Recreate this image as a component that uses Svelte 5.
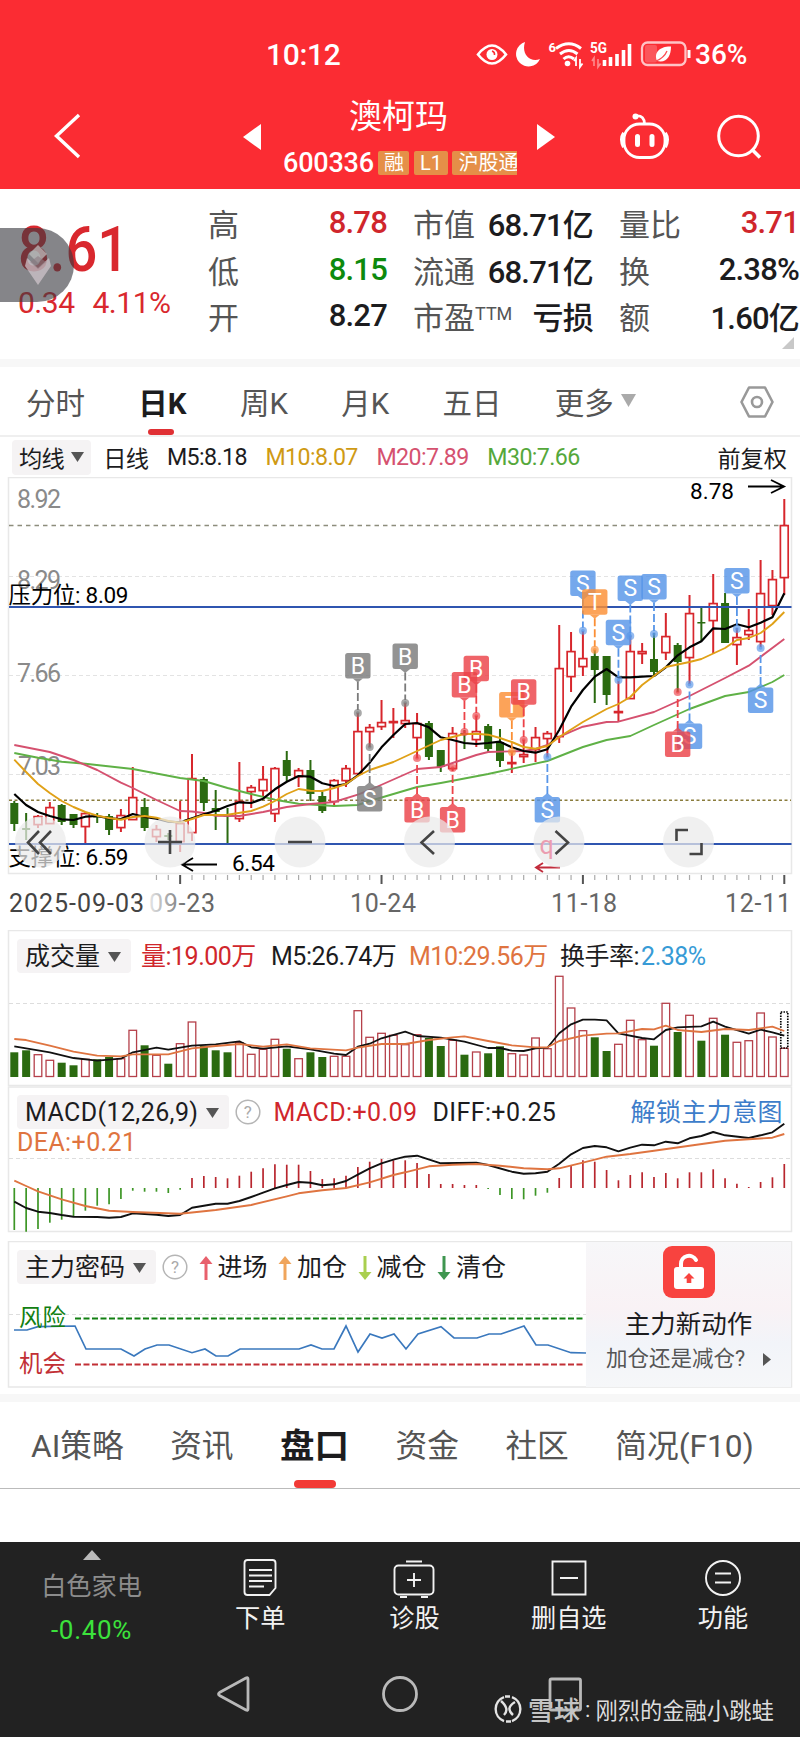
<script lang="ts">
	type Pair = [number, number]
	type Marker = { text: string; kind: string; i: number; top: number; dot: number; up?: boolean }

	const STEP = 11.846
	const x = (i: number) => 14.3 + STEP * i

	// [high, body top, body bottom, low, rising]
	const candles = [
		[801, 803, 824, 831, 0], [813, 828, 830, 840, 0], [815, 816, 825, 828, 1], [802, 807, 824, 824, 1],
		[804, 805, 822, 825, 0], [814, 814, 825, 828, 0], [812, 813, 827, 843, 1], [813, 816, 817, 823, 0],
		[814, 816, 830, 835, 0], [809, 815, 828, 832, 1], [767, 797, 820, 820, 1], [798, 807, 828, 831, 0],
		[825, 829, 837, 842, 1], [833, 835, 837, 840, 0], [801, 823, 842, 852, 1], [754, 778, 833, 841, 1],
		[777, 779, 803, 811, 0], [790, 808, 812, 830, 0], [808, 815, 816, 843, 0], [762, 801, 819, 822, 1],
		[785, 787, 792, 808, 1], [766, 779, 791, 796, 1], [767, 768, 814, 822, 1], [751, 760, 776, 781, 0],
		[768, 770, 777, 787, 1], [760, 770, 794, 801, 0], [792, 796, 811, 813, 0], [779, 780, 802, 807, 1],
		[765, 768, 781, 787, 1], [713, 731, 774, 775, 1], [724, 727, 732, 747, 1], [700, 722, 727, 730, 1],
		[708, 721, 723, 738, 1], [703, 720, 724, 728, 1], [713, 723, 738, 758, 1], [721, 723, 757, 760, 0],
		[750, 750, 767, 772, 0], [727, 733, 769, 771, 1], [730, 733, 735, 749, 0], [716, 731, 740, 747, 1],
		[724, 726, 749, 752, 0], [729, 742, 761, 767, 0], [751, 762, 764, 773, 1], [740, 754, 757, 763, 1],
		[727, 737, 750, 762, 1], [731, 733, 739, 757, 1], [625, 668, 737, 743, 1], [632, 651, 677, 692, 1],
		[631, 658, 667, 676, 1], [650, 656, 670, 703, 0], [656, 656, 695, 705, 0], [681, 711, 713, 722, 1],
		[636, 651, 699, 699, 1], [643, 651, 654, 664, 1], [633, 659, 672, 676, 0], [613, 636, 653, 660, 1],
		[643, 645, 662, 692, 0], [595, 613, 658, 684, 1], [608, 622, 623, 641, 0], [574, 603, 621, 654, 1],
		[593, 603, 643, 643, 0], [628, 637, 645, 665, 1], [609, 630, 635, 640, 1], [560, 593, 642, 647, 1],
		[570, 579, 606, 615, 1], [499, 525, 578, 595, 1],
	]

	const ma5 = [
		794, 805, 812, 816, 819.3, 820, 816.7, 816, 818.3, 819, 814, 817, 818.7, 821.7, 822.3, 818.3, 814.3, 810.7, 806,
		802.3, 803, 798.7, 789.3, 781.7, 776, 776.7, 783.3, 786, 784, 775.3, 762.7, 747.3, 735, 724, 723, 727.3, 737.3,
		740, 743, 744, 743, 741.7, 747.3, 751, 752.7, 749.3, 730, 706.7, 690, 676.7, 669, 677.3, 677.3, 676.7, 676,
		667.3, 655.3, 647.3, 641.3, 628.3, 629, 624.3, 627.3, 622.7, 617.3, 593.3,
	].map((y, i): Pair => [i, y])
	const ma10: Pair[] = [
		[0, 759.7], [1, 772], [2, 784], [3, 793], [4, 801], [5, 807], [6, 812], [7, 815.7], [8, 818], [9, 819.7],
		[10, 817], [11, 816], [12, 817.7], [13, 821], [14, 822.7], [15, 819], [16, 815], [18, 814.7], [20, 811],
		[21, 806.7], [22, 801], [23, 794], [24, 789], [25, 790.7], [26, 791], [27, 788], [28, 784], [29, 776],
		[30, 770], [32, 762], [34, 751], [36, 740], [38, 734], [39, 733.7], [40, 734.7], [41, 738], [42, 742],
		[43, 747], [44, 748.7], [45, 746], [46, 737], [48, 722], [50, 709], [51, 704], [52, 697], [53, 685],
		[54, 676], [55, 667], [57, 662], [58, 659], [60, 648], [61, 640], [62, 638], [63, 633], [64, 624], [65, 612],
	]
	const ma20: Pair[] = [
		[0, 745], [3, 752], [5, 760], [7, 770], [9, 782.7], [10, 788], [12, 800], [14, 811], [15, 811.5], [16, 813],
		[17, 815.7], [19, 816], [21, 812], [23, 807], [25, 804], [27, 802], [29, 794.7], [30, 790], [34, 769],
		[36, 767], [37, 763], [39, 755], [40, 752], [43, 751], [44, 749], [45, 745], [46, 737], [47, 731.7],
		[48, 726.7], [50, 722], [51, 721.7], [54, 712], [57, 696], [60, 678], [62, 665.7], [65, 639],
	]
	const ma30: Pair[] = [
		[0, 753], [2, 757.7], [4, 761.7], [6, 763.7], [10, 769], [14, 778], [16, 781], [18, 788], [20, 794],
		[22, 799.7], [24, 803.7], [27, 806], [29, 805], [30, 801], [34, 787], [36, 783], [40, 774], [45, 761],
		[48, 747], [50, 740], [52, 736], [54, 725], [57, 709], [60, 696], [62, 692], [64, 682], [65, 675],
	]

	const markers: Marker[] = [
		{ text: 'B', kind: 'grey', i: 29, top: 653, dot: 713 },
		{ text: 'B', kind: 'grey', i: 33, top: 643.5, dot: 703 },
		{ text: 'S', kind: 'grey', i: 30, top: 786, dot: 747, up: true },
		{ text: 'B', kind: 'red', i: 34, top: 797, dot: 758, up: true },
		{ text: 'B', kind: 'red', i: 37, top: 807, dot: 768, up: true },
		{ text: 'B', kind: 'red', i: 39, top: 655.7, dot: 716 },
		{ text: 'B', kind: 'red', i: 38, top: 672, dot: 732 },
		{ text: 'T', kind: 'orange', i: 42, top: 692, dot: 752 },
		{ text: 'B', kind: 'red', i: 43, top: 679.3, dot: 740 },
		{ text: 'S', kind: 'blue', i: 45, top: 797, dot: 757, up: true },
		{ text: 'S', kind: 'blue', i: 48, top: 570.5, dot: 630.7 },
		{ text: 'T', kind: 'orange', i: 49, top: 589.3, dot: 649.7 },
		{ text: 'S', kind: 'blue', i: 51, top: 619.7, dot: 680 },
		{ text: 'S', kind: 'blue', i: 52, top: 575.4, dot: 636 },
		{ text: 'S', kind: 'blue', i: 54, top: 574, dot: 634 },
		{ text: 'S', kind: 'blue', i: 57, top: 723.4, dot: 684.5, up: true },
		{ text: 'B', kind: 'red', i: 56, top: 731.4, dot: 692, up: true },
		{ text: 'S', kind: 'blue', i: 61, top: 568, dot: 629 },
		{ text: 'S', kind: 'blue', i: 63, top: 687.4, dot: 648, up: true },
	]

	const volumes = [
		24.7, 26.7, 22.3, 16.7, 14.3, 11.7, 17.7, 17.7, 20, 18.3, 46.7, 31.7, 21.7, 13.3, 33.3, 55, 31, 26.7, 24.7, 34.3,
		22.7, 27.7, 37.7, 28.3, 18.3, 24.7, 20, 20.7, 20.7, 66.3, 39.7, 43.7, 41.7, 32.3, 42.3, 39, 31, 36.7, 22.3, 25,
		23.7, 30.7, 23.3, 22, 39, 28.3, 100.7, 69, 46.3, 39.7, 26, 32.7, 56.7, 37.3, 31.3, 73.7, 45, 61.7, 36.3, 58.7,
		42.3, 34.7, 36.3, 64, 40, 28.7,
	]
	// averages of the lower panels are kept in thirds of a pixel
	const vol5: Pair[] = [
		[0, 364], [2, 376], [3, 382], [5, 399], [7, 407], [9, 401], [10, 382], [12, 368], [13, 374], [15, 362],
		[17, 358], [19, 349], [20, 367], [21, 371], [23, 364], [25, 373], [27, 386], [28, 390], [29, 365], [30, 356],
		[31, 340], [33, 320], [34, 333], [36, 338], [38, 350], [40, 369], [41, 369], [42, 377], [43, 378], [44, 370],
		[45, 368], [46, 325], [47, 298], [48, 284], [49, 284], [50, 286], [51, 325], [53, 339], [54, 343], [55, 315],
		[56, 307], [58, 304], [59, 290], [60, 305], [62, 326], [63, 314], [64, 322], [65, 332],
	]
	const vol10: Pair[] = [
		[0, 342], [1, 345], [3, 362], [5, 380], [7, 392], [9, 394], [10, 388], [13, 388], [15, 370], [17, 363],
		[19, 357], [21, 365], [23, 358], [25, 370], [28, 376], [29, 368], [31, 357], [33, 357], [35, 345], [37, 337],
		[38, 334], [40, 348], [42, 361], [44, 367], [45, 367], [46, 348], [48, 332], [50, 326], [51, 325], [53, 312],
		[54, 313], [55, 302], [56, 315], [58, 321], [60, 312], [62, 315], [64, 305], [65, 318],
	]
	const macd = [
		915, 920, 912, 893, 884, 873, 857, 842, 838, 822, 797, 800, 800, 804, 794, 759, 753, 756, 760, 752, 740, 730,
		718, 719, 719, 738, 762, 760, 752, 726, 710, 702, 706, 706, 714, 747, 777, 777, 780, 780, 792, 810, 822, 823,
		812, 803, 759, 722, 706, 710, 735, 766, 750, 742, 756, 744, 760, 742, 742, 733, 760, 776, 786, 771, 757, 717,
	]
	const diff: Pair[] = [
		[0, 830], [1, 849], [2, 860], [3, 864], [4, 870], [5, 875], [7, 876], [8, 878], [9, 876], [10, 865],
		[12, 869], [13, 873], [14, 870], [15, 848], [17, 836], [18, 836], [19, 828], [20, 816], [21, 803], [22, 790],
		[23, 780], [24, 771], [25, 773], [26, 781], [27, 778], [28, 768], [29, 749], [30, 730], [31, 715], [32, 704],
		[33, 695], [34, 692], [36, 715], [39, 713], [40, 720], [42, 740], [43, 746], [44, 745], [45, 740], [46, 716],
		[47, 688], [48, 669], [49, 663], [50, 667], [51, 679], [52, 668], [53, 659], [54, 661], [55, 650], [56, 655],
		[57, 640], [58, 633], [59, 621], [60, 631], [62, 639], [63, 631], [64, 622], [65, 596],
	]
	const dea: Pair[] = [
		[0, 767], [1, 783], [2, 799], [4, 823], [6, 843], [8, 857], [10, 861], [14, 866], [17, 855], [20, 840],
		[23, 814], [24, 805], [26, 796], [28, 789], [30, 772], [32, 750], [33, 742], [35, 724], [37, 719], [39, 717],
		[41, 722], [43, 730], [45, 733], [46, 730], [48, 713], [50, 695], [52, 687], [54, 677], [57, 662], [60, 647],
		[62, 643], [64, 638], [65, 627],
	]
	const risk =
		'14,1330 27,1330 38,1326.7 75,1326 86,1349 121,1349 134,1356 145,1349 157,1345 169,1345 192,1352.7 205,1349 216,1356 228,1356 240,1349 299,1349 311,1345 322,1349 334,1349 346,1326 358,1352 370,1334 382,1338 394,1334 406,1349 418,1334 441,1326.7 454,1338 477,1338 489,1334 501,1334 524,1326 536,1345 548,1345 571,1352.7 586,1353'

	const line = (pts: Pair[]) => pts.map(([i, y]) => `${x(i).toFixed(1)},${y}`).join(' ')
	const thirds = (pts: Pair[]) => line(pts.map(([i, y]): Pair => [i, +(925 + y / 3).toFixed(1)]))

	const ticks = Array.from({ length: 54 }, (_, n) => n + 12)
	const bigTicks = [14, 31, 48, 65]
	const signals = [
		{ label: '进场', color: '#e8606c', down: false },
		{ label: '加仓', color: '#f0a55c', down: false },
		{ label: '减仓', color: '#a9cf4f', down: true },
		{ label: '清仓', color: '#3f9650', down: true },
	]
	let period = $state('日K')
	let section = $state('盘口')
</script>

{#snippet caret()}
	<svg class="caret" width="13" height="10" viewBox="0 0 13 10"><path d="M0 0h13l-6.5 10z" fill="currentColor" /></svg>
{/snippet}

{#snippet help()}
	<svg class="help" width="26" height="26" viewBox="0 0 26 26">
		<circle cx="13" cy="13" r="11.8" fill="none" stroke="#b5b5b5" stroke-width="1.5" />
		<text x="13" y="19" text-anchor="middle" font-size="17" fill="#aaa">?</text>
	</svg>
{/snippet}

<div class="phone">
	<header>
		<div class="status">
			<span class="clock">10:12</span>
			<svg width="217" height="34" viewBox="474 37 217 34" fill="none" stroke="#fff">
				<path d="M478 54.500q14-18 28 0q-14 18-28 0z" stroke-width="2.600" />
				<circle cx="492" cy="54.500" r="5.500" fill="#fff" stroke="none" />
				<path d="M492 51q3 1 2.500 4" stroke="#fb2c33" stroke-width="1.500" />
				<path d="M525 42a12.500 12.500 0 1 0 15 17c-10 4-19-5-15-17z" fill="#fff" stroke="none" />
				<text x="548.500" y="52" font-size="13" class="mini">6</text>
				<path d="M556 48.500q13-9.500 25 0M560 54q9-7 17.500 0M563.500 59q5-4.500 10.500 0" stroke-width="3" />
				<circle cx="567.500" cy="63.500" r="2.800" fill="#fff" stroke="none" />
				<path d="M574 61l2-3v8M580 59v8l2.500-3.500" stroke-width="1.800" />
				<text x="590" y="53" font-size="14.500" textLength="17" lengthAdjust="spacingAndGlyphs" class="mini">5G</text>
				<path d="M592 61l2-3v8M598 59v8l2.500-3.500" stroke-width="1.600" opacity=".45" />
				<path d="M604.500 66v-6M610.500 66v-9M617 66v-12M623.500 66v-16M629.500 66v-22" stroke-width="3.600" />
				<rect x="642" y="42.500" width="43.500" height="22.500" rx="5.500" stroke="#ffc4c6" stroke-width="2.300" />
				<rect x="645" y="45" width="12" height="17.500" rx="2" fill="#fff" fill-opacity=".2" stroke="none" />
				<path d="M657 61c-4-9 4-15 14-14.500c0 9-4 17-14 14.500z" fill="#fff" stroke="none" />
				<path d="M656 61q8-3 11-10" stroke="#fb4c52" stroke-width="1.300" />
				<path d="M689 50v8" stroke-width="3" />
			</svg>
			<span class="power">36%</span>
		</div>
		<div class="titlebar">
			<svg class="back" width="30" height="48" viewBox="53 112 30 48"><path d="M79 115L56.500 136L79 157" fill="none" stroke="#fff" stroke-width="3.400" /></svg>
			<svg class="prev" width="18" height="26" viewBox="0 0 18 26"><path d="M18 0v26L0 13z" fill="#fff" /></svg>
			<div class="stock">
				<h1>澳柯玛</h1>
				<div class="code">
					<span>600336</span>
					<i>融</i>
					<i class="l1">L1</i>
					<i class="hk">沪股通</i>
				</div>
			</div>
			<svg class="next" width="18" height="26" viewBox="0 0 18 26"><path d="M0 0v26l18-13z" fill="#fff" /></svg>
			<svg class="robot" width="52" height="48" viewBox="619 113 52 48" fill="none" stroke="#fff" stroke-width="2.800">
				<rect x="624" y="125" width="41" height="33.500" rx="15.500" />
				<path d="M624 134q-4 6 0 14M665 134q4 6 0 14" stroke-width="4" />
				<path d="M644.500 125q0-8.500-8-8" />
				<circle cx="635.500" cy="117.500" r="3" fill="#fff" stroke="none" />
				<path d="M637.500 137.500v8M652 137.500v8" stroke-width="5" stroke-linecap="round" />
			</svg>
			<svg class="search" width="46" height="46" viewBox="716 113 46 46" fill="none" stroke="#fff" stroke-width="3">
				<circle cx="738.500" cy="136" r="19.800" />
				<path d="M751.500 149l8.500 8.500" stroke-width="3.600" />
			</svg>
		</div>
	</header>

	<section class="quote">
		<div class="last">
			<strong>8.61</strong>
			<p><span>0.34</span><span>4.11%</span></p>
		</div>
		<dl>
			<dt>高</dt><dd class="up">8.78</dd>
			<dt>市值</dt><dd>68.71亿</dd>
			<dt>量比</dt><dd class="up">3.71</dd>
			<dt>低</dt><dd class="down">8.15</dd>
			<dt>流通</dt><dd>68.71亿</dd>
			<dt>换</dt><dd>2.38%</dd>
			<dt>开</dt><dd>8.27</dd>
			<dt>市盈<sup>TTM</sup></dt><dd>亏损</dd>
			<dt>额</dt><dd>1.60亿</dd>
		</dl>
		<svg class="corner" width="12" height="12" viewBox="0 0 12 12"><path d="M12 0v12H0z" fill="#c8c8c8" /></svg>
		<div class="bubble">
			<svg width="32" height="42" viewBox="0 0 32 42"><path d="M16 1l9 9-9 9-9-9z" fill="#bbb" opacity=".75" /><path d="M5 14l11 10 11-10 2 8-13 19L3 22z" fill="#d3c8ce" opacity=".7" /><path d="M8 18l8 7 8-7-8-6z" fill="#8c7c82" opacity=".6" /></svg>
		</div>
	</section>

	<nav class="periods">
		{#each ['分时', '日K', '周K', '月K', '五日', '更多'] as name}
			<button class:active={period === name} onclick={() => (period = name)}>
				{name}
				{#if name === '更多'}
					<svg width="15" height="13" viewBox="0 0 15 13"><path d="M0 0h15L7.500 13z" fill="#aaa" /></svg>
				{/if}
			</button>
		{/each}
		<svg class="gear" width="36" height="34" viewBox="0 0 36 34" fill="none" stroke="#999" stroke-width="2.600"><path d="M10 2.500h16L33.500 17L26 31.500H10L2.500 17z" stroke-linejoin="round" /><circle cx="18" cy="17" r="5" /></svg>
	</nav>

	<div class="averages">
		<button class="pick">均线 {@render caret()}</button>
		<span>日线</span>
		<span>M5:8.18</span>
		<span class="m10">M10:8.07</span>
		<span class="m20">M20:7.89</span>
		<span class="m30">M30:7.66</span>
		<span class="adjust">前复权</span>
	</div>

	<div class="kline">
		<svg width="800" height="453" viewBox="0 477 800 453">
			<defs>
				<linearGradient id="haze" x1="0" x2="1"><stop offset="0" stop-color="#fff" stop-opacity="0.9" /><stop offset="1" stop-color="#fff" stop-opacity="0" /></linearGradient>
			</defs>
			<path d="M8.500 477.500H791.500V873.500H8.500z" fill="none" stroke="#e8e8e8" stroke-width="1.500" />
			<path d="M9 576.500H791M9 675.500H791M9 774.500H791" stroke="#e3e3e3" stroke-dasharray="4 3" />
			<path d="M9 525.500H791" stroke="#8d8d7c" stroke-width="1.300" stroke-dasharray="4.500 4" />
			<path d="M9 800.300H791" stroke="#8a7c3c" stroke-width="1.500" stroke-dasharray="3 2.500" />
			<g class="axis">
				<text x="17" y="507.500" textLength="44">8.92</text>
				<text x="17" y="588.500" textLength="44">8.29</text>
				<text x="17" y="682" textLength="44">7.66</text>
				<text x="18" y="775" textLength="43">7.03</text>
			</g>

			{#each candles as [high, top, bottom, low, rising], i}
				{@const color = rising ? '#d7262c' : '#2b6a10'}
				<path d={`M${x(i)} ${high}V${top}M${x(i)} ${bottom}V${low}`} stroke={color} stroke-width="2" />
				{#if rising}
					<rect x={x(i) - 3.9} y={top + 0.6} width="7.800" height={Math.max(bottom - top - 1, 1)} fill="#fff" stroke={color} stroke-width="1.700" />
				{:else}
					<rect x={x(i) - 4} y={top} width="8" height={Math.max(bottom - top, 1.5)} fill={color} />
				{/if}
			{/each}

			<g fill="none" stroke-width="1.900" stroke-linejoin="round">
				<polyline points={line(ma30)} stroke="#5fb146" />
				<polyline points={line(ma20)} stroke="#d5516f" />
				<polyline points={line(ma5)} stroke="#000" stroke-width="2.200" />
				<polyline points={line(ma10)} stroke="#e0a117" />
			</g>

			<path d="M9 607H791.500M9 844H791.500" stroke="#2f55b0" stroke-width="2.200" />

			{#each markers as m}
				<g class={`marker ${m.kind}`}>
					<path class="stem" d={m.up ? `M${x(m.i)} ${m.dot + 7}V${m.top - 3}` : `M${x(m.i)} ${m.top + 29}V${m.dot - 3}`} />
					<circle cx={x(m.i)} cy={m.dot} r="4" />
					<circle cx={x(m.i)} cy={m.dot} r="1.800" />
					<rect x={x(m.i) - 12.7} y={m.top} width="25.400" height="25.500" rx="2.500" />
					<path class="tip" d={m.up ? `M${x(m.i) - 5} ${m.top}l5-4l5 4z` : `M${x(m.i) - 5} ${m.top + 25.5}l5 4l5-4z`} />
					<text x={x(m.i)} y={m.top + 21}>{m.text}</text>
				</g>
			{/each}

			<g class="note">
				<text x="8.500" y="602.500" textLength="120">压力位: 8.09</text>
				<text x="8.500" y="864.500" textLength="120">支撑位: 6.59</text>
				<text x="232" y="871" textLength="43">6.54</text>
				<text x="690" y="499" textLength="44">8.78</text>
			</g>
			<g fill="none" stroke="#000" stroke-width="1.900">
				<path d="M748 486.500H784M771 480L784 486.500L771 493" />
				<path d="M217 864.500H182M193 858L182 864.500L193 871" />
				<path d="M560 867.500H536M543 863L536 867.500L543 872" stroke="#c22c3c" />
			</g>

			{#each ticks as i}
				<path d={`M${x(i)} 875V${bigTicks.includes(i) ? 884 : 880}`} stroke={bigTicks.includes(i) ? '#555' : '#aaa'} stroke-width={bigTicks.includes(i) ? 2 : 1.2} />
			{/each}
			<g class="dates">
				<text x="149" y="911.500" textLength="66">09-23</text>
				<rect x="146" y="888" width="42" height="28" fill="url(#haze)" />
				<text x="9" y="911.500" textLength="135" class="first">2025-09-03</text>
				<text x="350" y="911.500" textLength="66">10-24</text>
				<text x="551" y="911.500" textLength="66">11-18</text>
				<text x="725" y="911.500" textLength="66">12-11</text>
			</g>

			<!-- zoom and pan controls -->
			<g fill="#eaeaea" fill-opacity=".72">
				{#each [40.5, 170, 300, 429.5, 559, 688.5] as cx}
					<circle {cx} cy="842" r="25.500" />
				{/each}
			</g>
			<text x="539.500" y="854" font-size="25" fill="#eb9db0">q</text>
			<g fill="none" stroke="#444" stroke-width="2.600">
				<path d="M39 831L28 842.500L39 854M51 831L40 842.500L51 854" />
				<path d="M158 842H182M170 830V854M288 842H312" />
				<path d="M434 831L421.500 842.500L434 854M555.500 831L568 842.500L555.500 854" />
				<path d="M676.500 841V830H688M701.500 843V854H689.500" />
			</g>
		</svg>
	</div>

	<section class="panel volume">
		<div class="legend">
			<button class="pick">成交量 {@render caret()}</button>
			<span class="v up">量:19.00万</span>
			<span class="v5">M5:26.74万</span>
			<span class="v10 warm">M10:29.56万</span>
			<span>换手率:<b>2.38%</b></span>
		</div>
		<svg width="800" height="156" viewBox="0 930 800 156">
			<path d="M8.500 930.500H791.500V1085.500H8.500z" fill="none" stroke="#e8e8e8" stroke-width="1.500" />
			<path d="M9 1003.500H791" stroke="#ddd" stroke-dasharray="4 3" />
			{#each volumes as v, i}
				{#if candles[i][4]}
					<rect x={x(i) - 3.8} y={1077 - v} width="7.600" height={v - 0.5} fill="#fff" stroke="#b5404a" stroke-width="1.300" />
				{:else}
					<rect x={x(i) - 4} y={1077 - v} width="8" height={v} fill="#2b6a10" />
				{/if}
			{/each}
			<rect x={x(65) - 3.5} y="1012" width="7" height="36" fill="none" stroke="#000" stroke-width="1.700" stroke-dasharray="1.500 1.200" />
			<g fill="none" stroke-width="1.800" stroke-linejoin="round">
				<polyline points={thirds(vol5)} stroke="#111" />
				<polyline points={thirds(vol10)} stroke="#df7440" />
			</g>
		</svg>
	</section>

	<section class="panel macd">
		<div class="legend">
			<button class="pick">MACD(12,26,9) {@render caret()}</button>
			{@render help()}
			<span class="md up">MACD:+0.09</span>
			<span>DIFF:+0.25</span>
			<a href="#unlock">解锁主力意图</a>
			<span class="dea warm">DEA:+0.21</span>
		</div>
		<svg width="800" height="155" viewBox="0 1086 800 155">
			<path d="M8.500 1087H791.500V1231.500H8.500z" fill="none" stroke="#e8e8e8" stroke-width="1.500" />
			<path d="M9 1158.500H791" stroke="#ddd" stroke-dasharray="4 3" />
			{#each macd as v, i}
				<path d={`M${x(i)} 1188V${(925 + v / 3).toFixed(1)}`} stroke={v > 789 ? '#3d9626' : '#b8262e'} stroke-width="1.700" />
			{/each}
			<g fill="none" stroke-width="1.900" stroke-linejoin="round">
				<polyline points={thirds(diff)} stroke="#111" />
				<polyline points={thirds(dea)} stroke="#df7440" />
			</g>
		</svg>
	</section>

	<section class="panel secret">
		<div class="legend">
			<button class="pick">主力密码 {@render caret()}</button>
			{@render help()}
			{#each signals as s}
				<span class="signal">
					<svg width="14" height="24" viewBox="0 0 14 24">
						<path transform={s.down ? 'rotate(180 7 12)' : undefined} d="M7 0l6.500 8H8.500v16h-3V8H.5z" fill={s.color} />
					</svg>{s.label}
				</span>
			{/each}
		</div>
		<svg width="800" height="153" viewBox="0 1241 800 153">
			<path d="M8.500 1241.500H791.500V1387H8.500z" fill="none" stroke="#e8e8e8" stroke-width="1.500" />
			<path d="M9 1314.500H586" stroke="#ddd" stroke-dasharray="4 3" />
			<path d="M75 1318.500H584" stroke="#128012" stroke-width="2" stroke-dasharray="6 2.500" />
			<path d="M75 1364.500H584" stroke="#c22f35" stroke-width="2" stroke-dasharray="6 2.500" />
			<polyline points={risk} fill="none" stroke="#3a78bd" stroke-width="1.700" />
			<text x="19" y="1326" font-size="23.500" fill="#128012">风险</text>
			<text x="19" y="1372" font-size="23.500" fill="#c22f35">机会</text>
		</svg>
		<aside>
			<svg width="52" height="52" viewBox="0 0 52 52">
				<rect width="52" height="52" rx="9" fill="#f8433f" />
				<path d="M18 22v-4a8 8 0 0 1 15-4" fill="none" stroke="#fff" stroke-width="4" stroke-linecap="round" />
				<rect x="11" y="21" width="30" height="22" rx="3" fill="#fff" />
				<path d="M26 27l5.500 5.500h-3.200V37h-4.600v-4.500h-3.200z" fill="#f8433f" />
			</svg>
			<strong>主力新动作</strong>
			<p>加仓还是减仓? <svg width="8" height="13" viewBox="0 0 8 13"><path d="M0 0l8 6.500L0 13z" fill="#555" /></svg></p>
		</aside>
	</section>

	<nav class="sections">
		{#each ['AI策略', '资讯', '盘口', '资金', '社区', '简况(F10)'] as name}
			<button class:active={section === name} onclick={() => (section = name)}>{name}</button>
		{/each}
	</nav>

	<footer>
		<div class="actions">
			<div class="sector">
				<svg width="18" height="10" viewBox="0 0 18 10"><path d="M9 0l9 10H0z" fill="#bbb" /></svg>
				<span>白色家电</span>
				<em>-0.40%</em>
			</div>
			<div class="action">
				<svg width="42" height="42" viewBox="0 0 42 42"><path d="M7 3h25q3 0 3 3v25l-6 7H7q-3 0-3-3V6q0-3 3-3z" transform="translate(1.500 0)" /><path d="M10 13h23M10 18.500h23M10 24h23M10 29.500h15" /></svg>
				下单
			</div>
			<div class="action">
				<svg width="42" height="42" viewBox="0 0 42 42"><rect x="1.500" y="8.500" width="39" height="29" rx="4" /><path d="M13 4.500h16M7 40h7M28 40h7M21 16v14M14 23h14" /></svg>
				诊股
			</div>
			<div class="action">
				<svg width="42" height="42" viewBox="0 0 42 42"><path d="M4.500 4.500h33v33h-33zM12 21h18" /></svg>
				删自选
			</div>
			<div class="action">
				<svg width="42" height="42" viewBox="0 0 42 42"><circle cx="21" cy="21" r="17" /><path d="M13 16.500h16M13 25.500h16" /></svg>
				功能
			</div>
		</div>
		<div class="system">
			<svg width="40" height="40" viewBox="0 0 40 40"><path d="M33 5v30q0 2-2 1L4.500 21.500q-2-1.500 0-3L31 4q2-1 2 1z" stroke-linejoin="round" /></svg>
			<svg width="40" height="40" viewBox="0 0 40 40"><circle cx="20" cy="20" r="16.500" /></svg>
			<svg width="40" height="40" viewBox="0 0 40 40"><rect x="5" y="5" width="30.500" height="31" rx="1.500" /></svg>
		</div>
		<div class="credit">
			<svg width="30" height="30" viewBox="0 0 30 30" fill="none" stroke="#e4e4e4" stroke-width="2.400"><path d="M11 27a12.800 12.800 0 0 1 0-24M19 3a12.800 12.800 0 0 1 0 24M12 2.500h5M13 27.500h5M8 7q9 8 3 14M22 8q-10 6-2 13" /></svg>
			<b>雪球</b><span>:</span><span>刚烈的金融小跳蛙</span>
		</div>
	</footer>
</div>

<style>
	:global(body) {
		background: #fff;
	}

	.phone {
		width: 800px;
		height: 1737px;
		overflow: hidden;
		display: flex;
		flex-direction: column;
		font-family: Roboto, 'Noto Sans CJK SC', sans-serif;
		color: #1c1c1e;
		background: #fff;
	}

	svg {
		display: block;
		flex: none;
	}

	button {
		border: 0;
		padding: 0;
		background: none;
		font: inherit;
		letter-spacing: inherit;
		color: inherit;
		display: flex;
		align-items: center;
		white-space: nowrap;
	}

	/* --- Header --- */
	header {
		height: 189px;
		flex: none;
		background: #fb2c33;
		color: #fff;
	}

	.status {
		height: 54px;
		padding: 27px 0 0 266px;
		display: flex;
		align-items: center;
		font-weight: 500;
	}

	.status .mini {
		fill: #fff;
		stroke: none;
		font-weight: 700;
	}

	.clock {
		width: 208px;
		font-size: 30px;
		letter-spacing: -0.3px;
	}

	.power {
		margin-left: 4px;
		font-size: 28px;
	}

	.titlebar {
		height: 109px;
		display: flex;
		align-items: center;
	}

	.back {
		margin-left: 53px;
	}

	.prev {
		margin: 3px 22px 0 160px;
	}

	.stock {
		width: 234px;
		height: 107px;
		overflow: hidden;
	}

	h1 {
		margin: 15px 0 0;
		font-size: 33px;
		line-height: 40px;
		font-weight: 400;
		text-align: center;
		text-indent: -3px;
	}

	.code {
		margin-top: 14px;
		display: flex;
		align-items: center;
		gap: 4.5px;
		font-size: 27px;
		line-height: 24px;
		font-weight: 500;
		letter-spacing: -0.2px;
	}

	.code span {
		width: 97px;
	}

	.code i {
		flex: none;
		height: 24px;
		padding: 0 5.500px;
		border-radius: 2px;
		background: #e58f48;
		font-size: 20px;
		font-style: normal;
		font-weight: 400;
		letter-spacing: 0;
	}

	.code .l1 {
		padding: 0 6px;
	}

	.code .hk {
		padding: 0 6px;
	}

	.next {
		margin: 3px 64px 0 20px;
	}

	.search {
		margin-left: 45px;
	}

	/* --- Quote --- */
	.quote {
		position: relative;
		height: 170px;
		flex: none;
		display: flex;
		border-bottom: 8px solid #f7f7f7;
	}

	.last {
		width: 208px;
		color: #d9282e;
	}

	.last strong {
		display: block;
		margin: 24px 0 0 18px;
		font-size: 63px;
		line-height: 74px;
		font-weight: 500;
		transform: scaleX(0.89);
		transform-origin: left;
	}

	.last p {
		margin: -1px 0 0 18px;
		display: flex;
		gap: 18px;
		font-size: 30px;
		line-height: 34px;
		letter-spacing: -0.5px;
	}

	dl {
		margin: 10px 0 0;
		display: grid;
		grid-template-columns: 60px 119px 96px 110px 96px 110px;
		grid-auto-rows: 46.700px;
		align-items: center;
		width: 592px;
		font-size: 31px;
	}

	dt {
		padding-left: 26px;
		color: #555;
		white-space: nowrap;
	}

	dt:nth-of-type(3n + 1) {
		padding-left: 0;
	}

	dd {
		margin: 0;
		text-align: right;
		font-weight: 500;
		letter-spacing: -0.800px;
		white-space: nowrap;
	}

	dt sup {
		font-size: 18px;
		line-height: 0;
		vertical-align: 9px;
	}

	.up {
		color: #d0262c;
	}

	.down {
		color: #0d8a0d;
	}

	.corner {
		position: absolute;
		right: 6px;
		bottom: 10px;
	}

	.bubble {
		position: absolute;
		left: 0;
		top: 39px;
		width: 74px;
		height: 74px;
		border-radius: 0 37px 37px 0;
		background: rgba(58, 58, 64, 0.62);
		display: flex;
		align-items: center;
		padding-left: 22px;
		box-sizing: border-box;
	}

	/* --- Periods --- */
	.periods {
		height: 68px;
		flex: none;
		display: flex;
		padding-left: 26px;
		border-bottom: 2px solid #efefef;
		font-size: 29.500px;
		color: #555;
	}

	.periods button {
		position: relative;
		margin-right: 53.300px;
		padding-bottom: 1px;
		gap: 7px;
	}

	.periods .active,
	.sections .active {
		color: #1c1c1e;
		font-weight: 700;
	}

	.periods .active::after {
		content: '';
		position: absolute;
		left: 10px;
		bottom: 0;
		width: 26px;
		height: 6px;
		border-radius: 3px;
		background: #e03034;
	}

	.gear {
		margin: 18px 25px 0 auto;
	}

	/* --- Moving averages --- */
	.averages {
		height: 40px;
		flex: none;
		display: flex;
		align-items: center;
		padding: 0 13px 0 12px;
		font-size: 23.200px;
		letter-spacing: -0.600px;
		white-space: nowrap;
	}

	.pick {
		background: #f5f3f4;
		border-radius: 4px;
		height: 35px;
		padding: 0 7px;
		gap: 7px;
		flex: none;
	}

	.caret {
		color: #555;
	}

	.averages span {
		margin-left: 18.600px;
	}

	.averages .pick + span {
		margin-left: 12px;
	}

	.m10 {
		color: #cf9a14;
	}

	.m20 {
		color: #d5516f;
	}

	.m30 {
		color: #55a83b;
	}

	.averages .adjust {
		margin-left: auto;
		letter-spacing: 0;
	}

	/* --- Charts --- */
	.kline {
		height: 453px;
		flex: none;
	}

	.axis {
		font-size: 25px;
		fill: #8a8a8a;
	}

	.note {
		font-size: 22.500px;
		fill: #000;
	}

	.dates {
		font-size: 25px;
		fill: #666;
	}

	.dates .first {
		fill: #444;
	}

	.marker text {
		fill: #fff;
		font-size: 23px;
		text-anchor: middle;
	}

	.marker circle,
	.marker rect,
	.marker .tip {
		fill: var(--c);
		fill-opacity: 0.82;
	}

	.marker circle {
		fill-opacity: 0.65;
	}

	.marker .stem {
		stroke: var(--c);
		stroke-width: 1.800;
		stroke-dasharray: 8 3;
	}

	.grey {
		--c: #7b7b7b;
	}

	.red {
		--c: #ec4248;
	}

	.orange {
		--c: #fb8f35;
	}

	.blue {
		--c: #5795e8;
	}

	.panel {
		position: relative;
		flex: none;
	}

	.legend {
		position: absolute;
		inset: 8px 17px auto;
		display: flex;
		align-items: center;
		flex-wrap: wrap;
		font-size: 25px;
		line-height: 34px;
		white-space: nowrap;
	}

	.legend .pick {
		padding: 2px 10px 0 8px;
		gap: 8px;
		height: 34px;
		box-sizing: border-box;
	}

	.legend span,
	.legend a {
		padding-top: 2px;
	}

	.volume .legend span {
		letter-spacing: -0.500px;
	}

	.macd .legend {
		letter-spacing: 0.400px;
	}

	.help {
		margin-left: 6px;
	}

	.v {
		width: 130px;
		margin-left: 10px;
	}

	.v5 {
		width: 138px;
	}

	.v10 {
		width: 151px;
	}

	.warm {
		color: #df7440;
	}

	.legend b {
		font-weight: 400;
		color: #379bd6;
		margin-left: 2px;
	}

	.md {
		width: 159px;
		margin-left: 12px;
	}

	.legend a {
		margin-left: auto;
		color: #3d7dca;
		text-decoration: none;
	}

	.legend .dea {
		width: 100%;
		padding-top: 0;
		line-height: 26px;
	}

	.signal {
		display: flex;
		align-items: center;
		gap: 5px;
		margin-left: 10.500px;
	}

	.secret {
		border-bottom: 8px solid #f7f7f7;
	}

	aside {
		position: absolute;
		left: 586px;
		top: 1px;
		width: 205px;
		height: 145px;
		display: flex;
		flex-direction: column;
		align-items: center;
		padding: 4px 0 0;
		box-sizing: border-box;
		background: linear-gradient(#f7f7f9, #f9f2f5 45%, #f2f4f9 70%, #f6f7f9);
	}

	aside strong {
		font-size: 25.500px;
		font-weight: 400;
		line-height: 30px;
		margin-top: 11px;
	}

	aside p {
		margin: 6px 0 0;
		font-size: 21.500px;
		line-height: 28px;
		color: #555;
		display: flex;
		align-items: center;
		gap: 18px;
	}

	/* --- Sections --- */
	.sections {
		height: 87px;
		flex: none;
		display: flex;
		padding-left: 31px;
		gap: 46.500px;
		border-bottom: 1px solid #bbb;
		font-size: 31.700px;
		color: #555;
		box-sizing: border-box;
	}

	.sections button {
		position: relative;
		padding-bottom: 5px;
	}

	.sections .active {
		font-size: 34.500px;
	}

	.sections .active::after {
		content: '';
		position: absolute;
		left: 14px;
		bottom: 0;
		width: 42px;
		height: 8px;
		border-radius: 4px;
		background: #f23a36;
	}

	/* --- Footer --- */
	footer {
		position: relative;
		margin-top: auto;
		height: 195px;
		flex: none;
		background: #222;
		color: #f2f2f2;
	}

	.actions {
		display: grid;
		grid-template-columns: 183px repeat(4, 154.300px);
		height: 118px;
		font-size: 25.200px;
	}

	.sector,
	.action {
		display: flex;
		flex-direction: column;
		align-items: center;
		line-height: 30px;
	}

	.sector {
		padding-top: 8px;
		color: #8c8c8c;
	}

	.sector span {
		margin-top: 12px;
	}

	.sector em {
		margin-top: 13px;
		font-style: normal;
		font-size: 26px;
		letter-spacing: 0.700px;
		color: #3ce23c;
	}

	.action {
		padding-top: 15px;
		gap: 5px;
	}

	.action svg {
		fill: none;
		stroke: #f2f2f2;
		stroke-width: 1.900;
	}

	.system {
		display: flex;
		justify-content: center;
		gap: 125px;
		padding: 14px 0 0 0;
	}

	.system svg {
		fill: none;
		stroke: #b9b9b9;
		stroke-width: 2.800;
	}

	.credit {
		position: absolute;
		left: 493px;
		bottom: 10px;
		display: flex;
		align-items: center;
		gap: 5px;
		font-size: 22.300px;
		color: #ddd;
	}

	.credit b {
		font-size: 26px;
		font-weight: 500;
		color: #c4c4c4;
	}
</style>
